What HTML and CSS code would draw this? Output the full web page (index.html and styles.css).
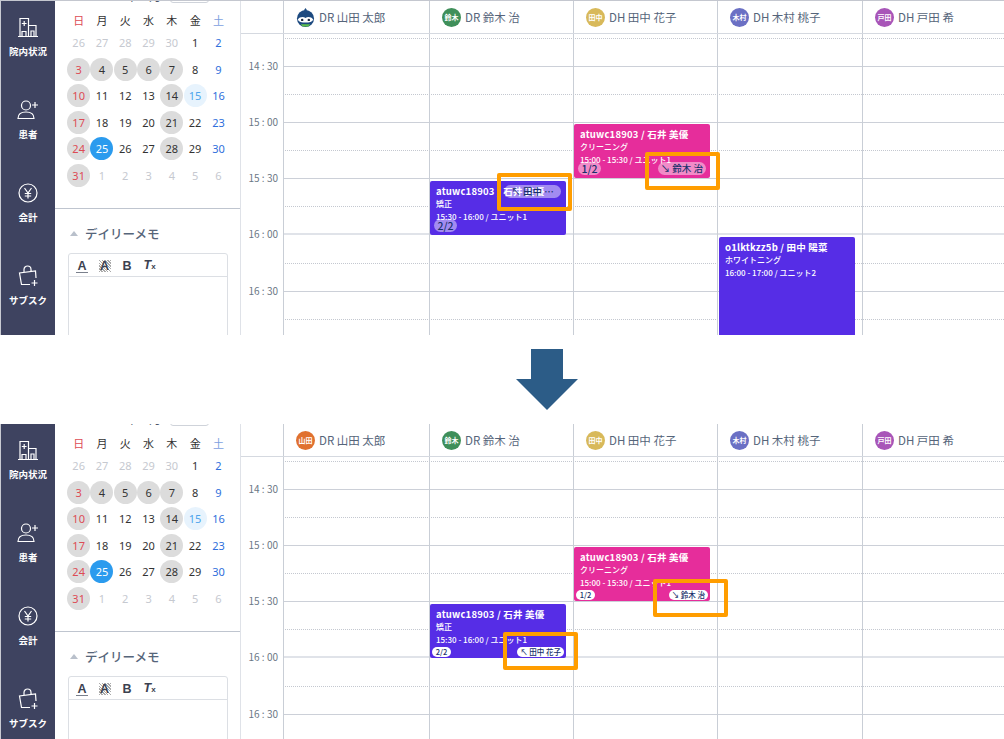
FILE: index.html
```html
<!DOCTYPE html>
<html lang="ja">
<head>
    <meta charset="UTF-8">
    <meta name="viewport" content="width=device-width, initial-scale=1.0">
    <title>担当者変更の表示</title>
    <link rel="stylesheet" href="styles.css">
</head>
<body>
    <!-- 変更前 -->
    <section class="shot shot-before">
        <nav class="sidebar">
            <a class="nav-item">
                <svg class="nav-icon" viewBox="0 0 22 22"><path d="M1 20.500h20M3 20V2.500h8.500V20M11.500 9.500H19V20M5 20v-4.500h4V20M14 20v-5h3v5M7.200 5v5M4.800 7.500h4.800"/></svg>
                院内状況
            </a>
            <a class="nav-item">
                <svg class="nav-icon" viewBox="0 0 22 22"><circle cx="9" cy="6.500" r="4.500"/><path d="M1 19.500c0-4.500 3.500-6.500 8-6.500s8 2 8 6.500zM18 3v6M15 6h6"/></svg>
                患者
            </a>
            <a class="nav-item">
                <svg class="nav-icon" viewBox="0 0 22 22"><circle cx="11" cy="11" r="9"/><path d="M7.500 6l3.500 5 3.500-5M11 11v5.500M7.800 11.500h6.400M7.800 14h6.400"/></svg>
                会計
            </a>
            <a class="nav-item">
                <svg class="nav-icon" viewBox="0 0 22 22"><path d="M13 19.500H4.500L2.500 8l16-2 .5 7M7 7V4.500a3.500 3.500 0 0 1 7 0V7M17.500 15v6M14.500 18h6"/></svg>
                サブスク
            </a>
        </nav>
        <aside class="side">
            <div class="calendar">
                <div class="cal-head"><div class="cal-head-inner"><span class="cal-month">2020 年 3 月</span><span class="cal-today"></span></div></div>
                <div class="cal-grid cal-week">
                    <span class="sun">日</span><span>月</span><span>火</span><span>水</span><span>木</span><span>金</span><span class="sat-soft">土</span>
                </div>
                <div class="cal-grid cal-days">
                    <span class="off">26</span><span class="off">27</span><span class="off">28</span><span class="off">29</span><span class="off">30</span><span>1</span><span class="sat">2</span>
                    <span class="sun closed">3</span><span class="closed">4</span><span class="closed">5</span><span class="closed">6</span><span class="closed">7</span><span>8</span><span class="sat">9</span>
                    <span class="sun closed">10</span><span>11</span><span>12</span><span>13</span><span class="closed">14</span><span class="holiday">15</span><span class="sat">16</span>
                    <span class="sun closed">17</span><span>18</span><span>19</span><span>20</span><span class="closed">21</span><span>22</span><span class="sat">23</span>
                    <span class="sun closed">24</span><span class="selected">25</span><span>26</span><span>27</span><span class="closed">28</span><span>29</span><span class="sat">30</span>
                    <span class="sun closed">31</span><span class="off">1</span><span class="off">2</span><span class="off">3</span><span class="off">4</span><span class="off">5</span><span class="off">6</span>
                </div>
            </div>
            <div class="memo">
                <h2 class="memo-title"><i class="memo-arrow"></i>デイリーメモ</h2>
                <div class="editor">
                    <div class="editor-tools">
                        <span class="tool tool-color">A</span>
                        <span class="tool tool-back">A</span>
                        <span class="tool tool-bold">B</span>
                        <span class="tool tool-clear">T<small>x</small></span>
                    </div>
                    <div class="editor-body"></div>
                </div>
            </div>
        </aside>
        <div class="sched">
            <div class="sched-head">
                <div class="head-blank"></div>
                <div class="head-cell head-w1">
                    <svg class="avatar-owl" viewBox="0 0 20 20"><circle cx="10" cy="11" r="9" fill="#1d4a80"/><path d="M8 3l2-3 2 3z" fill="#1d4a80"/><path d="M2 12c2-3 6-3 8-1.500 2-1.500 6-1.500 8 1.500-1 4.500-15 4.500-16 0z" fill="#fff"/><circle cx="6.500" cy="12.500" r="1.300" fill="#1d2a40"/><circle cx="13.500" cy="12.500" r="1.300" fill="#1d2a40"/><path d="M5 17h10l-2 2.500H7z" fill="#5fc04a"/></svg>
                    DR 山田 太郎
                </div>
                <div class="head-cell"><span class="avatar green">鈴木</span>DR 鈴木 治</div>
                <div class="head-cell"><span class="avatar yellow">田中</span>DH 田中 花子</div>
                <div class="head-cell head-w4"><span class="avatar indigo">木村</span>DH 木村 桃子</div>
                <div class="head-cell"><span class="avatar violet">戸田</span>DH 戸田 希</div>
            </div>
            <div class="sched-body">
                <div class="times">
                    <div class="time">14 : 30</div>
                    <div class="time">15 : 00</div>
                    <div class="time">15 : 30</div>
                    <div class="time">16 : 00</div>
                    <div class="time">16 : 30</div>
                </div>
                <div class="grid-area">
                    <div class="lines">
                        <div class="line line-first"></div>
                        <div class="line"></div>
                        <div class="line line-dot"></div>
                        <div class="line"></div>
                        <div class="line line-dot"></div>
                        <div class="line"></div>
                        <div class="line line-dot"></div>
                        <div class="line line-wide"></div>
                        <div class="line line-dot"></div>
                        <div class="line"></div>
                        <div class="line line-dot"></div>
                    </div>
                    <div class="cols">
                        <div class="col col-w1"></div>
                        <div class="col">
                            <div class="appt purple at-1530">
                                <p class="appt-title">atuwc18903 / 石井 美優</p>
                                <p class="appt-sub">矯正</p>
                                <p class="appt-time">15:30 - 16:00 / ユニット1</p>
                                <span class="count">2/2</span>
                                <span class="tag tag-wide">↖ 田中 …</span>
                            </div>
                        </div>
                        <div class="col">
                            <div class="appt pink at-1500">
                                <p class="appt-title">atuwc18903 / 石井 美優</p>
                                <p class="appt-sub">クリーニング</p>
                                <p class="appt-time">15:00 - 15:30 / ユニット1</p>
                                <span class="count">1/2</span>
                                <span class="tag">↘ 鈴木 治</span>
                            </div>
                        </div>
                        <div class="col col-w4">
                            <div class="appt purple at-1600">
                                <p class="appt-title">o1lktkzz5b / 田中 陽菜</p>
                                <p class="appt-sub">ホワイトニング</p>
                                <p class="appt-time">16:00 - 17:00 / ユニット2</p>
                            </div>
                        </div>
                        <div class="col"></div>
                    </div>
                </div>
            </div>
        </div>
        <div class="mark mark-before-1"></div>
        <div class="mark mark-before-2"></div>
    </section>

    <div class="arrow-row">
        <svg class="arrow" viewBox="0 0 62 61"><path d="M15 0h32v30h15L31 61 0 30h15z"/></svg>
    </div>

    <!-- 変更後 -->
    <section class="shot shot-after">
        <nav class="sidebar">
            <a class="nav-item">
                <svg class="nav-icon" viewBox="0 0 22 22"><path d="M1 20.500h20M3 20V2.500h8.500V20M11.500 9.500H19V20M5 20v-4.500h4V20M14 20v-5h3v5M7.200 5v5M4.800 7.500h4.800"/></svg>
                院内状況
            </a>
            <a class="nav-item">
                <svg class="nav-icon" viewBox="0 0 22 22"><circle cx="9" cy="6.500" r="4.500"/><path d="M1 19.500c0-4.500 3.500-6.500 8-6.500s8 2 8 6.500zM18 3v6M15 6h6"/></svg>
                患者
            </a>
            <a class="nav-item">
                <svg class="nav-icon" viewBox="0 0 22 22"><circle cx="11" cy="11" r="9"/><path d="M7.500 6l3.500 5 3.500-5M11 11v5.500M7.800 11.500h6.400M7.800 14h6.400"/></svg>
                会計
            </a>
            <a class="nav-item">
                <svg class="nav-icon" viewBox="0 0 22 22"><path d="M13 19.500H4.500L2.500 8l16-2 .5 7M7 7V4.500a3.500 3.500 0 0 1 7 0V7M17.500 15v6M14.500 18h6"/></svg>
                サブスク
            </a>
        </nav>
        <aside class="side">
            <div class="calendar">
                <div class="cal-head"><div class="cal-head-inner"><span class="cal-month">2020 年 3 月</span><span class="cal-today"></span></div></div>
                <div class="cal-grid cal-week">
                    <span class="sun">日</span><span>月</span><span>火</span><span>水</span><span>木</span><span>金</span><span class="sat-soft">土</span>
                </div>
                <div class="cal-grid cal-days">
                    <span class="off">26</span><span class="off">27</span><span class="off">28</span><span class="off">29</span><span class="off">30</span><span>1</span><span class="sat">2</span>
                    <span class="sun closed">3</span><span class="closed">4</span><span class="closed">5</span><span class="closed">6</span><span class="closed">7</span><span>8</span><span class="sat">9</span>
                    <span class="sun closed">10</span><span>11</span><span>12</span><span>13</span><span class="closed">14</span><span class="holiday">15</span><span class="sat">16</span>
                    <span class="sun closed">17</span><span>18</span><span>19</span><span>20</span><span class="closed">21</span><span>22</span><span class="sat">23</span>
                    <span class="sun closed">24</span><span class="selected">25</span><span>26</span><span>27</span><span class="closed">28</span><span>29</span><span class="sat">30</span>
                    <span class="sun closed">31</span><span class="off">1</span><span class="off">2</span><span class="off">3</span><span class="off">4</span><span class="off">5</span><span class="off">6</span>
                </div>
            </div>
            <div class="memo">
                <h2 class="memo-title"><i class="memo-arrow"></i>デイリーメモ</h2>
                <div class="editor">
                    <div class="editor-tools">
                        <span class="tool tool-color">A</span>
                        <span class="tool tool-back">A</span>
                        <span class="tool tool-bold">B</span>
                        <span class="tool tool-clear">T<small>x</small></span>
                    </div>
                    <div class="editor-body"></div>
                </div>
            </div>
        </aside>
        <div class="sched">
            <div class="sched-head">
                <div class="head-blank"></div>
                <div class="head-cell head-w1"><span class="avatar orange">山田</span>DR 山田 太郎</div>
                <div class="head-cell"><span class="avatar green">鈴木</span>DR 鈴木 治</div>
                <div class="head-cell"><span class="avatar yellow">田中</span>DH 田中 花子</div>
                <div class="head-cell head-w4"><span class="avatar indigo">木村</span>DH 木村 桃子</div>
                <div class="head-cell"><span class="avatar violet">戸田</span>DH 戸田 希</div>
            </div>
            <div class="sched-body">
                <div class="times">
                    <div class="time">14 : 30</div>
                    <div class="time">15 : 00</div>
                    <div class="time">15 : 30</div>
                    <div class="time">16 : 00</div>
                    <div class="time">16 : 30</div>
                </div>
                <div class="grid-area">
                    <div class="lines">
                        <div class="line line-first"></div>
                        <div class="line"></div>
                        <div class="line line-dot"></div>
                        <div class="line"></div>
                        <div class="line line-dot"></div>
                        <div class="line"></div>
                        <div class="line line-dot"></div>
                        <div class="line line-wide"></div>
                        <div class="line line-dot"></div>
                        <div class="line"></div>
                        <div class="line line-dot"></div>
                    </div>
                    <div class="cols">
                        <div class="col col-w1"></div>
                        <div class="col">
                            <div class="appt purple at-1530">
                                <p class="appt-title">atuwc18903 / 石井 美優</p>
                                <p class="appt-sub">矯正</p>
                                <p class="appt-time">15:30 - 16:00 / ユニット1</p>
                                <span class="count count-small">2/2</span>
                                <span class="tag tag-small">↖ 田中 花子</span>
                            </div>
                        </div>
                        <div class="col">
                            <div class="appt pink at-1500">
                                <p class="appt-title">atuwc18903 / 石井 美優</p>
                                <p class="appt-sub">クリーニング</p>
                                <p class="appt-time">15:00 - 15:30 / ユニット1</p>
                                <span class="count count-small">1/2</span>
                                <span class="tag tag-small">↘ 鈴木 治</span>
                            </div>
                        </div>
                        <div class="col col-w4"></div>
                        <div class="col"></div>
                    </div>
                </div>
            </div>
        </div>
        <div class="mark mark-after-1"></div>
        <div class="mark mark-after-2"></div>
    </section>
</body>
</html>
```

FILE: styles.css
```css
/* 全体 */
html, body {
    margin: 0;
    padding: 0;
    overflow: hidden;
}

body {
    width: 1004px;
    height: 739px;
    background: #fff;
    font-family: "Noto Sans CJK JP", "Noto Sans", sans-serif;
    color: #333;
}

.shot {
    position: relative;
    display: flex;
    box-sizing: border-box;
    overflow: hidden;
    background: #fff;
    border-top: 1px solid #fff;
}

.shot-before {
    height: 335px;
    border-top-color: #c4c7cf;
}

.shot-after {
    height: 316px;
}

/* 矢印 */
.arrow-row {
    height: 88px;
    padding: 14px 0 0 516px;
    box-sizing: border-box;
}

.arrow {
    display: block;
    width: 62px;
    height: 61px;
    fill: #2c5c87;
}

/* 左メニュー */
.sidebar {
    flex: none;
    box-sizing: border-box;
    width: 55px;
    padding-top: 15px;
    background: #3e4360;
    border-left: 1px solid #c8cad2;
}

.nav-item {
    display: block;
    height: 83px;
    color: #fff;
    font-size: 9.5px;
    font-weight: 700;
    line-height: 12px;
    text-align: center;
}

.nav-icon {
    display: block;
    width: 22px;
    height: 22px;
    margin: 0 auto 7px;
    fill: none;
    stroke: #fff;
    stroke-width: 1.200;
}

/* カレンダー */
.side {
    flex: none;
    box-sizing: border-box;
    width: 186px;
    border-right: 1px solid #dfe2e8;
}

.calendar {
    box-sizing: border-box;
    height: 208px;
    padding-left: 12px;
    border-bottom: 1px solid #bfc5cf;
}

.cal-head {
    height: 9px;
    overflow: hidden;
}

.cal-head-inner {
    display: flex;
    gap: 9px;
    height: 14px;
    margin-top: -12px;
    padding-left: 29px;
    font-size: 12px;
    line-height: 14px;
    color: #4a5568;
}

.cal-today {
    width: 37px;
    border: 1px solid #cfd3da;
    border-radius: 3px;
}

.cal-grid {
    display: grid;
    grid-template-columns: repeat(7, 23.300px);
    justify-items: center;
    align-items: center;
}

.cal-week {
    height: 19.500px;
    font-size: 11px;
}

.cal-days {
    grid-auto-rows: 26.500px;
    font-family: "Noto Sans", sans-serif;
    font-size: 11px;
}

.cal-days span {
    display: flex;
    align-items: center;
    justify-content: center;
    width: 23px;
    height: 23px;
    border-radius: 50%;
}

.cal-grid .off {
    color: #c6c9d0;
}

.cal-grid .sun {
    color: #dd4b55;
}

.cal-grid .sat {
    color: #2f6fdc;
}

.sat-soft {
    color: #7d9fe0;
}

.cal-grid .closed {
    background: #dcdcdc;
}

.cal-grid .holiday {
    background: #e7f3fd;
    color: #4ea5ec;
}

.cal-grid .selected {
    background: #2b9bee;
    color: #fff;
}

/* デイリーメモ */
.memo {
    padding: 14px 13px 0;
}

.memo-title {
    display: flex;
    align-items: center;
    height: 20px;
    margin: 0 0 10px;
    font-size: 12.500px;
    font-weight: 500;
    color: #56657a;
}

.memo-arrow {
    width: 0;
    height: 0;
    margin: 0 7px 0 2px;
    border-left: 4px solid transparent;
    border-right: 4px solid transparent;
    border-bottom: 5px solid #b9c0cb;
}

.editor {
    width: 160px;
    height: 120px;
    box-sizing: border-box;
    border: 1px solid #dcdfe4;
    border-radius: 3px;
}

.editor-tools {
    display: flex;
    align-items: center;
    gap: 10.500px;
    height: 23px;
    box-sizing: border-box;
    padding: 2px 0 0 7px;
    border-bottom: 1px solid #dcdfe4;
}

.tool {
    width: 12px;
    font-family: "Liberation Sans", sans-serif;
    font-size: 12.500px;
    font-weight: 700;
    line-height: 12px;
    text-align: center;
    color: #3c4250;
}

.tool-color {
    border-bottom: 1px solid #7a808c;
}

.tool-back {
    background: repeating-linear-gradient(45deg, #aaa 0 1px, #fff 1px 2px);
}

.tool-clear {
    font-style: italic;
    white-space: nowrap;
    border-bottom: 1px solid transparent;
}

.tool-clear small {
    font-size: 8px;
    font-style: normal;
    font-weight: 700;
}

/* スケジュール */
.sched {
    flex: 1;
    min-width: 0;
}

.sched-head {
    display: flex;
    box-sizing: border-box;
    height: 33px;
    border-bottom: 1px solid #d5d9e0;
}

.head-blank {
    flex: none;
    width: 42px;
}

.head-cell {
    flex: none;
    display: flex;
    align-items: center;
    gap: 4px;
    box-sizing: border-box;
    width: 144px;
    padding-left: 12px;
    border-left: 1px solid #c9ced6;
    font-size: 11.500px;
    color: #56657a;
}

.head-w1 {
    width: 146px;
}

.head-w4 {
    width: 145px;
}

.avatar, .avatar-owl {
    flex: none;
    width: 19px;
    height: 19px;
}

.avatar {
    display: flex;
    align-items: center;
    justify-content: center;
    border-radius: 50%;
    font-size: 7px;
    font-weight: 700;
    color: #fff;
}

.orange { background: #e0712f; }
.green { background: #3f8f5a; }
.yellow { background: #d8b95a; }
.indigo { background: #6b70c4; }
.violet { background: #a855b8; }

.sched-body {
    display: flex;
    height: 320px;
}

.times {
    flex: none;
    width: 42px;
    padding-top: 4px;
}

.time {
    height: 56.150px;
    padding-right: 5px;
    font-size: 10px;
    line-height: 56px;
    text-align: right;
    color: #6b7785;
    white-space: nowrap;
}

.grid-area {
    position: relative;
    flex: 1;
}

.line {
    box-sizing: border-box;
    height: 28.075px;
    border-bottom: 1px solid #ccd0d8;
}

.line-first {
    height: 5px;
    border-bottom: 1px dotted #c4c8d0;
}

.line-dot {
    border-bottom: 1px dotted #c4c8d0;
}

.line-wide {
    border-bottom: 2px solid #e0e3e9;
}

.cols {
    position: absolute;
    inset: 0;
    display: flex;
}

.col {
    position: relative;
    flex: none;
    box-sizing: border-box;
    width: 144px;
    border-left: 1px solid #c9ced6;
}

.col-w1 {
    width: 146px;
}

.col-w4 {
    width: 145px;
}

/* 予約 */
.appt {
    position: absolute;
    left: 0;
    width: 136px;
    box-sizing: border-box;
    padding: 4px 6px;
    border-radius: 2px;
    color: #fff;
    overflow: hidden;
}

.appt p {
    margin: 0;
    white-space: nowrap;
}

.appt-title {
    font-size: 9.500px;
    font-weight: 700;
    line-height: 13px;
    letter-spacing: 0.2px;
}

.appt-sub {
    font-size: 8px;
    font-weight: 500;
    line-height: 12px;
}

.appt-time {
    font-size: 8px;
    font-weight: 500;
    line-height: 13px;
}

.pink { background: #e62d9b; }
.purple { background: #562de6; }

.at-1500 {
    top: 90px;
    height: 54px;
}

.at-1530 {
    top: 147px;
    height: 54px;
}

.at-1600 {
    top: 203px;
    left: 1px;
    height: 140px;
}

.count, .tag {
    position: absolute;
    box-sizing: border-box;
    border-radius: 7px;
    background: rgba(255, 255, 255, 0.45);
    color: #17306b;
    font-weight: 500;
    white-space: nowrap;
}

.count {
    left: 4px;
    bottom: 3px;
    width: 23px;
    height: 13px;
    font-size: 10.500px;
    line-height: 13px;
    text-align: center;
}

.tag {
    right: 4px;
    bottom: 3px;
    height: 13px;
    padding: 0 3px;
    font-size: 9.500px;
    line-height: 13px;
}

.tag-wide {
    top: 4px;
    right: 5px;
    bottom: auto;
    width: 57px;
    text-align: center;
}

.count-small, .tag-small {
    height: 10px;
    bottom: 1px;
    background: #fff;
    font-size: 7.500px;
    line-height: 10px;
}

.count-small {
    left: 2px;
    width: 19px;
}

.tag-small {
    right: 2px;
}

/* オレンジの枠 */
.mark {
    position: absolute;
    box-sizing: border-box;
    width: 75px;
    height: 38px;
    border: 4px solid #ff9d00;
    border-radius: 2px;
}

.mark-before-1 { left: 497px; top: 172px; }
.mark-before-2 { left: 645px; top: 151px; }
.mark-after-1 { left: 653px; top: 155px; }
.mark-after-2 { left: 503px; top: 208px; }
```
